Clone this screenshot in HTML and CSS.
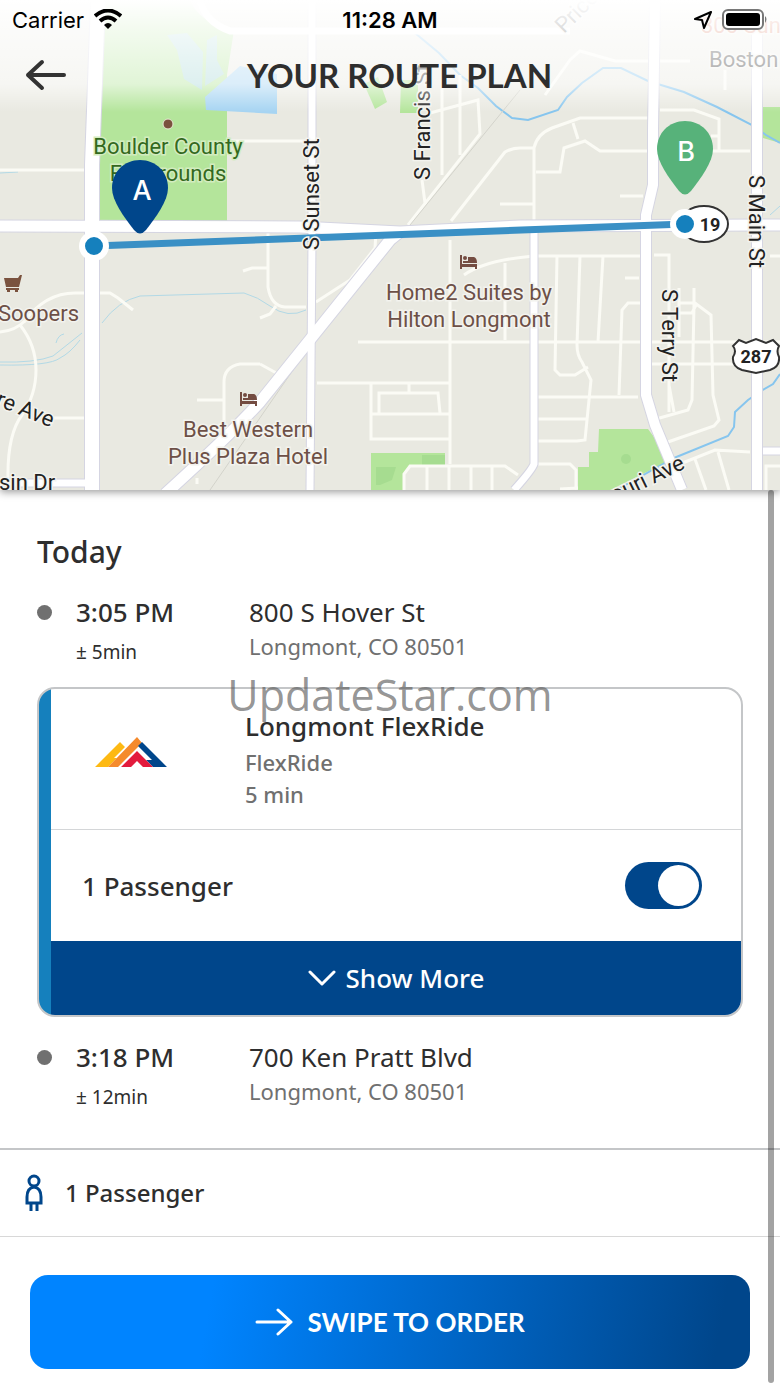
FILE: index.html
```
<!DOCTYPE html>
<html lang="en">
<head>
    <meta charset="UTF-8">
    <meta name="viewport" content="width=device-width, initial-scale=1.0">
    <title>Your Route Plan</title>
    <link rel="stylesheet" href="styles.css">
</head>
<body>
    <header class="map">
        <svg class="map-canvas" viewBox="0 0 780 490" role="img" aria-label="Route map">
            <defs>
                <linearGradient id="fade" x1="0" y1="0" x2="0" y2="1">
                    <stop offset="0" stop-color="#fff"/>
                    <stop offset="0.25" stop-color="#fff" stop-opacity="0.85"/>
                    <stop offset="0.75" stop-color="#fff" stop-opacity="0.6"/>
                    <stop offset="1" stop-color="#fff" stop-opacity="0"/>
                </linearGradient>
            </defs>
            <rect width="780" height="490" fill="#e9e9e1"/>

            <!-- parks -->
            <g fill="#b4e59b">
                <path d="M100 0H190Q200 24 234 30L227 75V222H100Z"/>
                <path d="M364 84L378 77L387 102L375 109Z"/>
                <path d="M401 80H418V113H400Z"/>
                <path d="M763 107H780V143L763 138Z"/>
                <path d="M371 453H445V466H410L404 474V490H371Z"/>
                <path d="M599 429H648L671 460L610 490H578V467H589V452H598Z"/>
            </g>
            <path d="M376 467H396L392 480L380 485H376Z M422 455H445V466H422Z" fill="#a6dc90"/>
            <circle cx="626" cy="459" r="5" fill="#a6dc90"/>
            <!-- ponds -->
            <g fill="#a6d4f2">
                <path d="M205 97L240 66L277 74V114L206 110Z"/>
                <path d="M167 35L187 33L203 52L202 90L184 79L177 50Z" opacity="0.7"/>
                <path d="M207 40L217 35V60L224 74L205 86Z" opacity="0.7"/>
            </g>

            <!-- creeks -->
            <g class="creek">
                <path d="M415 33L439 53L460 75L478 88L496 106L512 118L528 120L558 110L567 97L582 83L603 68L621 68L648 81L684 92L717 107L752 125L766 135L780 143"/>
                <path d="M780 374L773 384L761 391L748 400L735 412L734 427L728 436L674 458L620 488"/>
            </g>
            <g class="creek thin">
                <path d="M0 362Q35 363 53 356L82 333M0 365Q50 366 60 358Q70 353 80 340M102 323Q118 301 140 296L244 293Q258 297 270 306Q288 319 306 310M0 173L18 172M56 343Q58 335 64 334M770 215L780 206"/>
            </g>

            <!-- minor streets -->
            <g class="street">
                <path d="M0 170H84M0 332Q15 331 26 320M20 325Q36 345 36 370Q36 395 22 415Q7 435 8 480M24 322Q45 293 75 293H110L118 298L133 310M45 418H84"/>
                <path d="M227 141H310M243 271L252 268H260M197 400H223M260 364H240Q224 367 224 382V425M260 364L280 375M268 230V287Q271 306 285 307H306M316 302L350 280L375 248L376 232M260 268H268M260 318L270 314L276 306"/>
                <path d="M422 180L425 203M442 80V175M460 75V155M430 113L478 100L480 134L408 225M451 221L505 152Q512 148 520 148H534M450 240V464M500 204H534"/>
                <path d="M358 342H780M317 383H449M371 383V439H449M371 414H449M409 383V393M379 413V393H438L440 413M464 275Q485 260 534 256H640M505 263V340"/>
                <path d="M534 225V148Q537 134 552 128L580 118H648M573 123L578 139M536 172H560L564 148L585 141L600 151H648M620 196H643M545 95L570 60L580 51L615 61H690"/>
                <path d="M557 256L555 370L560 375H575L588 367M580 256L577 345Q577 355 582 362L591 380L585 440L577 441H538M603 256L598 342M538 397H638M538 419H587M625 278H639M640 303H628L622 310L619 395M538 464H570L576 470V490M560 489L578 488"/>
                <path d="M654 255H669V412M660 110H694L719 119V151H750M711 136H719M678 151H750M651 364H755M679 303H695L711 315L713 395L719 420L714 426L665 443M694 288V305L692 400L688 410L656 419M680 313H692L696 305M679 288V337M669 385L674 412M770 256H780M725 70V90"/>
                <path d="M404 490V474L410 466H505L518 475M427 466V490M449 466V490M471 466V490M492 466V490M670 468L715 450L750 452M695 459L706 490M718 452L729 490M766 490V466H780M197 478V484"/>
            </g>

            <!-- railway -->
            <path d="M520 90L300 360L210 490" fill="none" stroke="#d3d3cb"/>

            <!-- main roads, edge first and fill over it -->
            <g class="road edge">
                <path class="w16" d="M98 0L92 165V490"/>
                <path class="w12" d="M0 226L300 227L400 232L520 226L780 225"/>
                <path class="w8" d="M312 0V240L310 490"/>
                <path class="w12" d="M400 232L390 240L260 402Q225 440 165 494"/>
                <path class="w8" d="M534 225V464Q532 470 514 490"/>
                <path class="w10" d="M655 0L653 130V185L646 215V395L655 425L682 490"/>
                <path class="w10" d="M757 30V490"/>
                <path class="w8" d="M0 483H90M763 451H780"/>
            </g>
            <g class="road">
                <path class="w16" d="M98 0L92 165V490"/>
                <path class="w12" d="M0 226L300 227L400 232L520 226L780 225"/>
                <path class="w8" d="M312 0V240L310 490"/>
                <path class="w12" d="M400 232L390 240L260 402Q225 440 165 494"/>
                <path class="w8" d="M534 225V464Q532 470 514 490"/>
                <path class="w10" d="M655 0L653 130V185L646 215V395L655 425L682 490"/>
                <path class="w10" d="M757 30V490"/>
                <path class="w8" d="M0 483H90M763 451H780M200 0Q205 22 230 31H570"/>
            </g>

            <!-- route -->
            <path d="M94 246L685 224" stroke="#3a90c5" stroke-width="7"/>

            <!-- street names -->
            <g class="label">
                <text transform="translate(319 250) rotate(-90)">S Sunset St</text>
                <text transform="translate(430 180) rotate(-90)">S Francis St</text>
                <text transform="translate(662 289) rotate(90)">S Terry St</text>
                <text transform="translate(749 175) rotate(90)">S Main St</text>
                <text transform="translate(-12 402) rotate(22)">tre Ave</text>
                <text x="-1" y="490">sin Dr</text>
                <text transform="translate(686 468) rotate(-26)" text-anchor="end">ouri Ave</text>
                <text x="709" y="67">Boston Ave</text>
                <text transform="translate(564 34) rotate(-45)">Price</text>
                <text class="warm" x="701" y="33">300 Suns</text>
            </g>

            <!-- places -->
            <g class="label place">
                <text x="-2" y="321">Soopers</text>
                <text x="248" y="437" text-anchor="middle">Best Western</text>
                <text x="248" y="464" text-anchor="middle">Plus Plaza Hotel</text>
                <text x="469" y="300" text-anchor="middle">Home2 Suites by</text>
                <text x="469" y="327" text-anchor="middle">Hilton Longmont</text>
            </g>
            <g class="label park">
                <text x="168" y="154" text-anchor="middle">Boulder County</text>
                <text x="168" y="181" text-anchor="middle">Fairgrounds</text>
            </g>
            <circle cx="168" cy="124" r="5" fill="#7a523e" stroke="#e9e9d5"/>
            <path d="M4 278H18L20 275H22L19 287H6Z M6 288H19V290H6Z M7 290H10V292H7Z M15 290H18V292H15Z" fill="#7a523e"/>
            <g id="hotel" fill="#744c41">
                <path d="M460 255H462V264H477V269H475V267H462V269H460Z"/>
                <circle cx="465" cy="258" r="2"/>
                <path d="M463 261H468V257H474Q477 258 477 263H463Z"/>
            </g>
            <use href="#hotel" x="-220" y="137"/>

            <!-- highway shields -->
            <ellipse cx="704" cy="224" rx="24" ry="18" fill="#fff" stroke="#333" stroke-width="2"/>
            <text class="shield" x="710" y="231">19</text>
            <path d="M739 340L746 343L756 339L766 343L773 340L779 346Q776 351 779 357Q780 367 770 370L756 373L742 370Q732 367 733 357Q737 351 733 346Z" fill="#fff" stroke="#333" stroke-width="2"/>
            <text class="shield" x="756" y="363">287</text>

            <rect width="780" height="112" fill="url(#fade)"/>

            <!-- stops and pins -->
            <circle class="stop-ring" cx="94" cy="246" r="12"/>
            <circle class="stop-ring" cx="685" cy="224" r="12"/>
            <path d="M140 160C156 160 168 172 168 188C168 201 156 217 146 230Q140 237 134 230C124 217 112 201 112 188C112 172 124 160 140 160Z" fill="#00468b"/>
            <path d="M685 121C701 121 713 133 713 149C713 162 701 178 691 191Q685 198 679 191C669 178 657 162 657 149C657 133 669 121 685 121Z" fill="#57b27a"/>
            <text class="pin-text" x="142" y="200">A</text>
            <text class="pin-text" x="686" y="161">B</text>
        </svg>

        <div class="overlay">
            <div class="status-bar">
                <div class="carrier">
                    <span>Carrier</span>
                    <svg width="28" height="22" viewBox="0 0 28 22" fill="none" stroke="#000" stroke-width="4">
                        <path d="M1 7Q14 -4 27 7M6 12Q14 5 22 12"/>
                        <path d="M10 16Q14 12 18 16L14 20Z" fill="#000" stroke="none"/>
                    </svg>
                </div>
                <time>11:28 AM</time>
                <div class="battery">
                    <svg width="18" height="18" viewBox="0 0 18 18" fill="none" stroke="#000" stroke-width="2" stroke-linejoin="round">
                        <path d="M17 1L1 8L8 9L10 17Z"/>
                    </svg>
                    <svg width="46" height="22" viewBox="0 0 46 22">
                        <rect x="1" y="1" width="40" height="19" rx="5" fill="#fff" stroke="#777" stroke-width="2"/>
                        <rect x="4" y="4" width="34" height="13" rx="3"/>
                        <path d="M43 7Q46 10 43 14Z" fill="#777"/>
                    </svg>
                </div>
            </div>
            <div class="title-bar">
                <button class="back" type="button" aria-label="Back">
                    <svg width="42" height="32" viewBox="0 0 42 32" fill="none" stroke="#333" stroke-width="4" stroke-linecap="round" stroke-linejoin="round">
                        <path d="M39 16H3M17 3L3 16L17 29"/>
                    </svg>
                </button>
                <h1>YOUR ROUTE PLAN</h1>
            </div>
        </div>
    </header>

    <main>
        <section class="plan">
            <h2>Today</h2>
            <div class="stop">
                <span class="dot"></span>
                <div class="when">
                    <strong>3:05 PM</strong>
                    <small>± 5min</small>
                </div>
                <div class="where">
                    <span>800 S Hover St</span>
                    <span class="city">Longmont, CO 80501</span>
                </div>
            </div>

            <div class="ride-wrap">
                <article class="ride">
                    <div class="ride-info">
                        <svg class="logo" width="72" height="30" viewBox="0 0 72 30">
                            <path d="M0 30L25 5L30 10L19 21H22L13 30Z" fill="#fdb913"/>
                            <path d="M13 30L17 26L42 0L47 6L23 30Z" fill="#f58a2c"/>
                            <path d="M47 5L72 30H58L51 23H57L43 9Z" fill="#00468b"/>
                            <path d="M26 30L42 14L58 30H48L42 24L36 30Z" fill="#e31b3d"/>
                        </svg>
                        <div class="ride-text">
                            <h3>Longmont FlexRide</h3>
                            <p>FlexRide</p>
                            <p>5 min</p>
                        </div>
                    </div>
                    <div class="ride-passenger">
                        <label for="passenger">1 Passenger</label>
                        <input id="passenger" class="switch" type="checkbox" checked>
                    </div>
                    <button class="show-more" type="button">
                        <svg width="28" height="18" viewBox="0 0 28 18" fill="none" stroke="#fff" stroke-width="3" stroke-linecap="round" stroke-linejoin="round">
                            <path d="M2 3L14 15L26 3"/>
                        </svg>
                        Show More
                    </button>
                </article>
                <span class="watermark">UpdateStar.com</span>
            </div>

            <div class="stop">
                <span class="dot"></span>
                <div class="when">
                    <strong>3:18 PM</strong>
                    <small>± 12min</small>
                </div>
                <div class="where">
                    <span>700 Ken Pratt Blvd</span>
                    <span class="city">Longmont, CO 80501</span>
                </div>
            </div>
        </section>

        <div class="summary">
            <svg width="18" height="38" viewBox="0 0 18 38" fill="none" stroke="#00468b" stroke-width="3">
                <circle cx="9" cy="7" r="5"/>
                <path d="M9 13Q2 14 2 23V29H16V23Q16 14 9 13ZM6 29V37M12 29V37"/>
            </svg>
            <span>1 Passenger</span>
        </div>

        <div class="order">
            <button class="swipe" type="button">
                <svg width="38" height="28" viewBox="0 0 38 28" fill="none" stroke="#fff" stroke-width="3" stroke-linecap="round" stroke-linejoin="round">
                    <path d="M2 14H36M23 2L36 14L23 26"/>
                </svg>
                SWIPE TO ORDER
            </button>
        </div>
        <span class="scrollbar"></span>
    </main>
</body>
</html>
```
FILE: styles.css
```
:root {
    --navy: #00468b;
    --blue: #1580bd;
    --text: #2e2e2e;
    --muted: #707070;
    --border: #c4c6c8;
}
* {
    box-sizing: border-box;
}
body {
    margin: 0;
    font-family: "Noto Sans", "Open Sans", sans-serif;
    font-size: 26px;
    line-height: 34px;
    color: var(--text);
    background-color: #fff;
}
h1, h2, h3, p {
    margin: 0;
}
button {
    border: none;
    padding: 0;
    cursor: pointer;
    font-family: inherit;
    color: #fff;
}
svg {
    display: block;
    flex-shrink: 0;
}

/* Map */
.map {
    position: relative;
    z-index: 1;
    box-shadow: 0 2px 8px rgba(0, 0, 0, 0.4);
}
.map-canvas {
    width: 100%;
    height: auto;
}
.street {
    fill: none;
    stroke: #fbfbf5;
    stroke-width: 3px;
}
.creek {
    fill: none;
    stroke: #86c5ee;
    stroke-width: 2px;
}
.creek.thin {
    stroke: #b2d9e6;
    stroke-width: 1px;
}
.road {
    fill: none;
    stroke: #fff;
}
.w8 { stroke-width: 7px; }
.w10 { stroke-width: 10px; }
.w12 { stroke-width: 11px; }
.w16 { stroke-width: 14px; }
.edge {
    stroke: #d5d5e2;
}
.edge .w8 { stroke-width: 9px; }
.edge .w10 { stroke-width: 12px; }
.edge .w12 { stroke-width: 13px; }
.edge .w16 { stroke-width: 16px; }
.label {
    font-family: Roboto, sans-serif;
    font-size: 22px;
    fill: #222;
    stroke: #f3f3ee;
    stroke-width: 3px;
    paint-order: stroke;
}
.label .warm {
    fill: #d05a3a;
}
.place {
    fill: #6d5047;
}
.park {
    fill: #33691e;
    stroke: #d3ecc0;
}
.shield {
    font: 700 18px Roboto, sans-serif;
    text-anchor: middle;
    fill: #222;
}
.stop-ring {
    fill: var(--blue);
    stroke: #fff;
    stroke-width: 6px;
}
.pin-text {
    font: 500 27px Inter, sans-serif;
    text-anchor: middle;
    fill: #fff;
}

/* Status and title bars over the map */
.overlay {
    position: absolute;
    top: 0;
    left: 0;
    right: 0;
}
.status-bar {
    display: grid;
    grid-template-columns: 1fr auto 1fr;
    align-items: center;
    height: 40px;
    padding: 0 12px;
    font-family: Inter, sans-serif;
    font-size: 22px;
    color: #000;
}
.status-bar time {
    font-weight: 600;
}
.carrier, .battery {
    display: flex;
    align-items: center;
    gap: 10px;
}
.battery {
    justify-content: flex-end;
}
.title-bar {
    display: grid;
    grid-template-columns: 42px 1fr;
    align-items: center;
    height: 70px;
    padding: 0 48px 0 25px;
}
.back {
    background: none;
}
h1 {
    font-family: Lato, sans-serif;
    font-size: 33px;
    font-weight: 700;
    line-height: 40px;
    text-align: center;
}

/* Plan */
main {
    position: relative;
}
.plan {
    padding: 44px 37px 34px;
}
h2 {
    font-size: 30px;
    font-weight: 500;
    line-height: 36px;
    margin-bottom: 25px;
}
.stop {
    display: grid;
    grid-template-columns: 39px 173px 1fr;
}
.dot {
    width: 15px;
    height: 15px;
    margin-top: 10px;
    border-radius: 50%;
    background-color: var(--muted);
}
.when, .where {
    display: flex;
    flex-direction: column;
}
.when {
    gap: 6px;
}
.when strong {
    font-weight: 500;
}
.when small {
    font-size: 19px;
}
.city {
    font-size: 22px;
    color: var(--muted);
}
.ride-wrap {
    position: relative;
    margin: 18px 0 23px;
}
.ride {
    border: 2px solid var(--border);
    border-radius: 18px;
    overflow: hidden;
    background: linear-gradient(to right, var(--blue) 12px, #fff 12px);
    padding-left: 12px;
}
.ride-info {
    display: grid;
    grid-template-columns: 150px 1fr;
    align-items: start;
    padding: 17px 0 19px 44px;
    border-bottom: 1px solid #d4d6d8;
}
.logo {
    margin-top: 31px;
}
h3 {
    font-size: 26px;
    font-weight: 500;
    line-height: 40px;
}
.ride-text p {
    font-size: 22px;
    font-weight: 500;
    line-height: 32px;
    color: var(--muted);
}
.ride-passenger {
    display: flex;
    align-items: center;
    justify-content: space-between;
    height: 111px;
    padding: 0 39px 0 31px;
    font-weight: 500;
}
.switch {
    appearance: none;
    display: flex;
    justify-content: flex-end;
    width: 77px;
    height: 47px;
    margin: 0;
    padding: 3px;
    border-radius: 24px;
    background-color: #bbb;
    cursor: pointer;
}
.switch::before {
    content: "";
    width: 41px;
    height: 41px;
    border-radius: 50%;
    background-color: #fff;
}
.switch:checked {
    background-color: var(--navy);
}
.switch:not(:checked) {
    justify-content: flex-start;
}
.show-more {
    display: flex;
    align-items: center;
    justify-content: center;
    gap: 10px;
    width: 100%;
    height: 74px;
    background-color: var(--navy);
    font-size: 26px;
    font-weight: 500;
}
.watermark {
    position: absolute;
    top: -20px;
    left: 0;
    right: 0;
    font-family: "Open Sans", sans-serif;
    font-size: 43px;
    line-height: 56px;
    text-align: center;
    color: rgba(90, 90, 90, 0.65);
    pointer-events: none;
}

/* Bottom */
.summary {
    display: flex;
    align-items: center;
    gap: 22px;
    height: 89px;
    padding: 0 25px;
    border-top: 2px solid var(--border);
    border-bottom: 1px solid #d8d8d8;
    font-size: 24px;
    font-weight: 500;
}
.order {
    padding: 38px 30px 20px;
}
.swipe {
    display: flex;
    align-items: center;
    justify-content: center;
    gap: 14px;
    width: 100%;
    height: 94px;
    border-radius: 18px;
    background: linear-gradient(100deg, #0084ff 25%, #00468b 95%);
    font-family: Lato, sans-serif;
    font-size: 26px;
    font-weight: 700;
}
.scrollbar {
    position: absolute;
    top: 0;
    right: 6px;
    bottom: 6px;
    width: 6px;
    border-radius: 3px;
    background-color: rgba(0, 0, 0, 0.36);
}
```
